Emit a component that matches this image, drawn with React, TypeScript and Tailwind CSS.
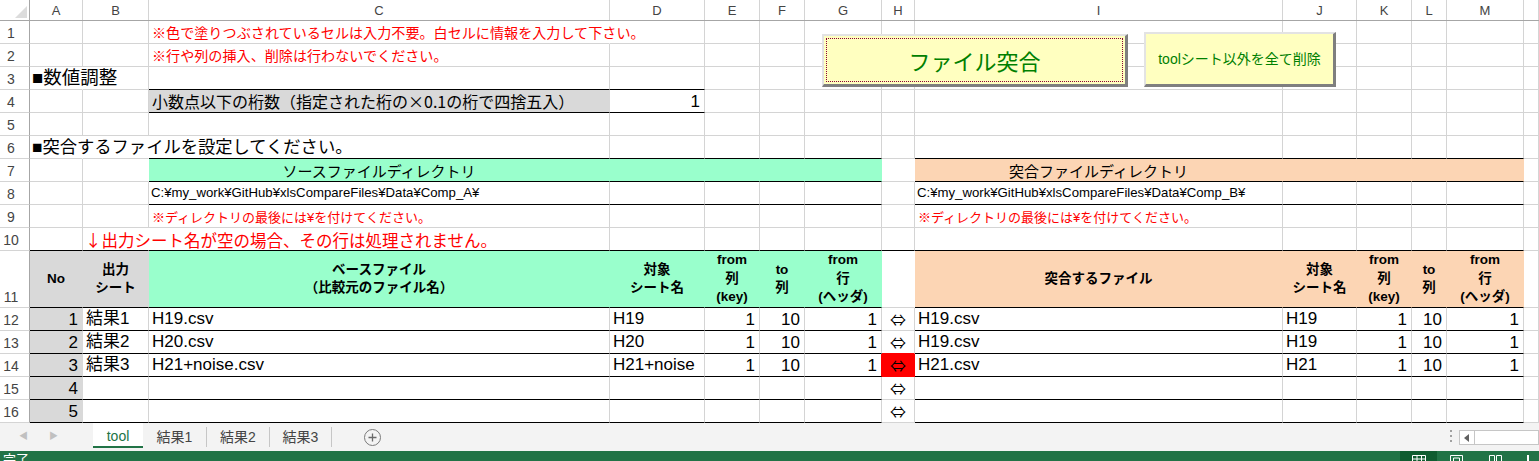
import type { ReactNode } from 'react';
import clsx from 'clsx';

// column widths A..N (each includes its 1px right gridline)
const W = [
  'w-[53px]', 'w-[66px]', 'w-[461px]', 'w-[95px]', 'w-[55px]', 'w-[45px]', 'w-[77px]',
  'w-[33px]', 'w-[368px]', 'w-[74px]', 'w-[55px]', 'w-[35px]', 'w-[77px]', 'flex-1',
];
const LETTERS = ['A', 'B', 'C', 'D', 'E', 'F', 'G', 'H', 'I', 'J', 'K', 'L', 'M', ''];

type Cell = { bg?: string; r?: string; b?: string; cls?: string; t?: ReactNode };

const BLK = 'border-b-black';
const NOR = 'border-r-transparent';
const L = 'items-end pl-[3px] pb-[3px]';
const R = 'items-end justify-end pr-[4px] pb-[2px]';

const green = (extra: Cell = {}): Cell => ({ bg: 'bg-[#99ffcc]', r: 'border-r-[#99ffcc]', b: BLK, ...extra });
const peach = (extra: Cell = {}): Cell => ({ bg: 'bg-[#fcd5b4]', r: 'border-r-[#fcd5b4]', b: BLK, ...extra });
const gray = (extra: Cell = {}): Cell => ({ bg: 'bg-[#d9d9d9]', r: 'border-r-[#d9d9d9]', b: BLK, ...extra });

const Over = ({ cls, children }: { cls: string; children: ReactNode }) => (
  <span className={clsx('relative z-10 whitespace-nowrap leading-none', cls)}>{children}</span>
);

const Head = ({ lines }: { lines: string[] }) => (
  <div className="flex w-full flex-col items-center justify-center text-center text-[13.5px] font-bold leading-[18.5px] text-black">
    {lines.map((l) => (
      <span key={l} className="whitespace-nowrap">{l}</span>
    ))}
  </div>
);

const Row = ({ n, tall, cells }: { n: number; tall?: boolean; cells: Record<number, Cell> }) => (
  <div className={clsx('flex', tall ? 'h-[57px]' : 'h-[23px]')}>
    <div className="flex w-[30px] shrink-0 items-end justify-center border-r border-b border-r-[#a6a6a6] border-b-[#d4d4d4] pr-[7px] pb-[3px] text-[14px] leading-none text-[#444]">
      {n}
    </div>
    {W.map((w, i) => {
      const c = cells[i] ?? {};
      return (
        <div
          key={i}
          className={clsx(
            'flex shrink-0 border-r border-b',
            w,
            c.bg,
            c.r ?? 'border-r-[#d4d4d4]',
            c.b ?? 'border-b-[#d4d4d4]',
            c.cls,
          )}
        >
          {c.t}
        </div>
      );
    })}
  </div>
);

const red = (s: string, size = 'text-[14px]') => <Over cls={clsx(size, 'text-[#ff0000]')}>{s}</Over>;
const data = (s: string) => <Over cls="text-[17px] text-black">{s}</Over>;
const num = (s: string) => <span className="text-[17px] leading-none text-black">{s}</span>;

const dataRow = (no: string, out: string, base: string, sheet: string, target: string, tsheet: string, hl = false, above = false): Cell[] => {
  const b = (extra: Cell = {}): Cell => ({ b: BLK, ...extra });
  return [
    gray({ cls: R, t: num(no) }),
    b({ cls: L, t: out ? data(out) : null }),
    b({ cls: L, t: base ? data(base) : null }),
    b({ cls: L, t: sheet ? data(sheet) : null }),
    b({ cls: R, t: out ? num('1') : null }),
    b({ cls: R, t: out ? num('10') : null }),
    b({ cls: R, t: out ? num('1') : null, r: hl ? 'border-r-[#ff0000]' : undefined }),
    {
      cls: 'items-end justify-center pb-[3px]',
      bg: hl ? 'bg-[#ff0000]' : undefined,
      r: hl ? 'border-r-[#ff0000]' : undefined,
      b: hl || above ? 'border-b-[#ff0000]' : undefined,
      t: <span className="text-[16px] leading-none text-black font-['Noto_Sans_CJK_JP',sans-serif]">⇔</span>,
    },
    b({ cls: L, t: target ? data(target) : null }),
    b({ cls: L, t: tsheet ? data(tsheet) : null }),
    b({ cls: R, t: out ? num('1') : null }),
    b({ cls: R, t: out ? num('10') : null }),
    b({ cls: R, t: out ? num('1') : null }),
  ];
};

const toMap = (arr: Cell[]) => Object.fromEntries(arr.map((c, i) => [i, c])) as Record<number, Cell>;

const ExcelButton = ({ className, children, focus }: { className: string; children: ReactNode; focus?: boolean }) => (
  <div
    className={clsx(
      'absolute z-20 border-t-2 border-l-2 border-t-[#e3e3e3] border-l-[#e3e3e3] border-r-[3px] border-b-[3px] border-r-[#7f7f7f] border-b-[#7f7f7f] bg-[#ffffc0] p-[2px]',
      className,
    )}
  >
    <div className={clsx('flex h-full w-full items-center justify-center', focus && 'border border-dotted border-[#8b0033]')}>
      {children}
    </div>
  </div>
);

export default function App() {
  return (
    <div className="relative h-[461px] w-[1539px] overflow-hidden bg-white font-['Liberation_Sans','Noto_Sans_CJK_JP',sans-serif]">
      {/* column headers */}
      <div className="flex h-[21px] border-b border-b-[#a6a6a6]">
        <div className="relative w-[30px] shrink-0 border-r border-r-[#a6a6a6]">
          <svg className="absolute left-[15px] top-[6px]" width="12" height="12" viewBox="0 0 12 12">
            <path d="M12 0 L12 12 L0 12 Z" fill="#dcdcdc" />
          </svg>
        </div>
        {W.map((w, i) => (
          <div
            key={i}
            className={clsx('flex shrink-0 items-center justify-center border-r border-r-[#d4d4d4] text-[13px] leading-none text-[#444]', w)}
          >
            {LETTERS[i]}
          </div>
        ))}
      </div>

      <Row n={1} cells={{ 2: { r: NOR, cls: L, t: red('※色で塗りつぶされているセルは入力不要。白セルに情報を入力して下さい。', 'text-[14.1px]') } }} />
      <Row n={2} cells={{ 2: { cls: L, t: red('※行や列の挿入、削除は行わないでください。', 'text-[14.1px]') } }} />
      <Row
        n={3}
        cells={{
          0: { r: NOR, cls: 'items-end pl-[2px] pb-[2px]', t: <Over cls="text-[18.5px] text-black">■数値調整</Over> },
          2: { b: BLK },
          3: { b: BLK },
        }}
      />
      <Row
        n={4}
        cells={{
          2: gray({
            cls: L,
            t: <Over cls="text-[16px] text-black font-['Noto_Sans_CJK_JP',sans-serif]">小数点以下の桁数（指定された桁の×0.1の桁で四捨五入）</Over>,
          }),
          3: { b: BLK, cls: R, t: num('1') },
        }}
      />
      <Row n={5} cells={{}} />
      <Row
        n={6}
        cells={{
          0: { r: NOR, cls: 'items-end pl-[2px] pb-[2px]', t: <Over cls="text-[17.3px] text-black">■突合するファイルを設定してください。</Over> },
          1: { r: NOR },
          2: { b: BLK },
          3: { b: BLK },
          4: { b: BLK },
          5: { b: BLK },
          6: { b: BLK },
          8: { b: BLK },
          9: { b: BLK },
          10: { b: BLK },
          11: { b: BLK },
          12: { b: BLK },
        }}
      />
      <Row
        n={7}
        cells={{
          1: { r: NOR },
          2: green({ cls: 'items-end justify-center pb-[2px]', t: <span className="text-[15px] leading-none text-black">ソースファイルディレクトリ</span> }),
          3: green(),
          4: green(),
          5: green(),
          6: green(),
          7: { r: NOR },
          8: peach({ cls: 'items-end justify-center pb-[2px]', t: <span className="text-[15px] leading-none text-black">突合ファイルディレクトリ</span> }),
          9: peach(),
          10: peach(),
          11: peach(),
          12: peach(),
        }}
      />
      <Row
        n={8}
        cells={{
          2: { b: BLK, cls: 'items-end pl-[2px] pb-[5px]', t: <Over cls="text-[13.2px] text-black">C:¥my_work¥GitHub¥xlsCompareFiles¥Data¥Comp_A¥</Over> },
          3: { b: BLK },
          4: { b: BLK },
          5: { b: BLK },
          6: { b: BLK },
          8: { b: BLK, cls: 'items-end pl-[2px] pb-[5px]', t: <Over cls="text-[13.2px] text-black">C:¥my_work¥GitHub¥xlsCompareFiles¥Data¥Comp_B¥</Over> },
          9: { b: BLK },
          10: { b: BLK },
          11: { b: BLK },
          12: { b: BLK },
        }}
      />
      <Row
        n={9}
        cells={{
          2: { cls: L, t: red('※ディレクトリの最後には¥を付けてください。', 'text-[13px]') },
          8: { cls: L, t: red('※ディレクトリの最後には¥を付けてください。', 'text-[13px]') },
        }}
      />
      <Row
        n={10}
        cells={{
          0: { b: BLK },
          1: {
            b: BLK,
            r: NOR,
            cls: 'items-end pl-[2px] pb-[2px]',
            t: (
              <Over cls="text-[16.5px] text-[#ff0000] font-['Noto_Sans_CJK_JP',sans-serif]">
                ↓出力シート名が空の場合、その行は処理されません。
              </Over>
            ),
          },
          2: { b: BLK },
          3: { b: BLK },
          4: { b: BLK },
          5: { b: BLK },
          6: { b: BLK },
          7: { b: BLK },
          8: { b: BLK },
          9: { b: BLK },
          10: { b: BLK },
          11: { b: BLK },
          12: { b: BLK },
        }}
      />
      <Row
        n={11}
        tall
        cells={{
          0: gray({ t: <Head lines={['No']} /> }),
          1: gray({ t: <Head lines={['出力', 'シート']} /> }),
          2: green({ t: <Head lines={['ベースファイル', '（比較元のファイル名）']} /> }),
          3: green({ t: <Head lines={['対象', 'シート名']} /> }),
          4: green({ t: <Head lines={['from', '列', '(key)']} /> }),
          5: green({ t: <Head lines={['to', '列']} /> }),
          6: green({ t: <Head lines={['from', '行', '(ヘッダ)']} /> }),
          7: { r: NOR },
          8: peach({ t: <Head lines={['突合するファイル']} /> }),
          9: peach({ t: <Head lines={['対象', 'シート名']} /> }),
          10: peach({ t: <Head lines={['from', '列', '(key)']} /> }),
          11: peach({ t: <Head lines={['to', '列']} /> }),
          12: peach({ t: <Head lines={['from', '行', '(ヘッダ)']} /> }),
        }}
      />
      <Row n={12} cells={toMap(dataRow('1', '結果1', 'H19.csv', 'H19', 'H19.csv', 'H19'))} />
      <Row n={13} cells={toMap(dataRow('2', '結果2', 'H20.csv', 'H20', 'H19.csv', 'H19', false, true))} />
      <Row n={14} cells={toMap(dataRow('3', '結果3', 'H21+noise.csv', 'H21+noise', 'H21.csv', 'H21', true))} />
      <Row n={15} cells={toMap(dataRow('4', '', '', '', '', ''))} />
      <Row n={16} cells={toMap(dataRow('5', '', '', '', '', ''))} />

      {/* sheet tabs */}
      <div className="flex h-[28px] items-start bg-[#f3f3f3] text-[14px] text-[#444]">
        <div className="flex w-[93px] items-center gap-[21px] pt-[9px] pl-[19px] text-[9px] leading-none text-[#c0c0c0]">
          <span>◀</span>
          <span>▶</span>
        </div>
        <div className="flex h-[25px] w-[50px] items-center justify-center border-b-2 border-b-[#217346] bg-white pt-[2px] leading-none text-[#217346]">
          tool
        </div>
        <div className="flex h-[25px] w-[63px] items-center justify-center pt-[2px] leading-none">結果1</div>
        <div className="mt-[4px] h-[20px] w-px bg-[#c6c6c6]" />
        <div className="flex h-[25px] w-[62px] items-center justify-center pt-[2px] leading-none">結果2</div>
        <div className="mt-[4px] h-[20px] w-px bg-[#c6c6c6]" />
        <div className="flex h-[25px] w-[61px] items-center justify-center pt-[2px] leading-none">結果3</div>
        <div className="mt-[4px] h-[20px] w-px bg-[#c6c6c6]" />
        <div className="ml-[32px] mt-[6px] flex h-[17px] w-[17px] items-center justify-center rounded-full border border-[#7a7a7a]">
          <svg width="9" height="9" viewBox="0 0 9 9">
            <path d="M4.5 0.5 V8.5 M0.5 4.5 H8.5" stroke="#6a6a6a" strokeWidth="1.3" />
          </svg>
        </div>
        <div className="flex-1" />
        <div className="mt-[7px] flex w-[16px] flex-col items-center gap-[3px]">
          <span className="h-[2px] w-[2px] bg-[#a0a0a0]" />
          <span className="h-[2px] w-[2px] bg-[#a0a0a0]" />
          <span className="h-[2px] w-[2px] bg-[#a0a0a0]" />
        </div>
        <div className="mt-[7px] flex h-[15px] w-[80px] border border-[#c6c6c6] bg-white">
          <div className="flex w-[15px] items-center justify-center border-r border-r-[#c6c6c6]">
            <svg width="6" height="8" viewBox="0 0 6 8">
              <path d="M5 0 L0 4 L5 8 Z" fill="#606060" />
            </svg>
          </div>
        </div>
      </div>

      {/* status bar */}
      <div className="flex h-[10px] items-start bg-[#217346] text-white">
        <span className="pl-[3px] pt-[2px] text-[13px] leading-none">完了</span>
        <div className="flex-1" />
        <div className="flex h-full w-[37px] items-start justify-center bg-[#0f5c30] pt-[4px]">
          <svg width="14" height="6" viewBox="0 0 14 6">
            <path d="M0.5 0.5 H13.5 M0.5 0.5 V6 M5 0.5 V6 M9.5 0.5 V6 M13.5 0.5 V6 M0.5 4 H13.5" stroke="#fff" fill="none" />
          </svg>
        </div>
        <div className="flex w-[39px] items-start justify-center pt-[4px]">
          <svg width="13" height="6" viewBox="0 0 13 6">
            <path d="M0.5 0.5 H12.5 V6 M0.5 0.5 V6 M3.5 3 H9.5 V6 M3.5 3 V6" stroke="#fff" fill="none" />
          </svg>
        </div>
        <div className="flex w-[39px] items-start justify-center pt-[4px]">
          <svg width="13" height="6" viewBox="0 0 13 6">
            <path d="M0.5 0.5 H5.5 V6 M0.5 0.5 V6 M7.5 0.5 H12.5 V6 M7.5 0.5 V6" stroke="#fff" fill="none" />
          </svg>
        </div>
        <div className="w-[24px]">
          <div className="ml-[12px] mt-[4px] h-[6px] w-[2px] bg-white" />
        </div>
      </div>

      {/* form buttons over the sheet */}
      <ExcelButton className="left-[822px] top-[34px] h-[53px] w-[306px]" focus>
        <span className="text-[22px] leading-none text-[#008000] font-['Noto_Sans_CJK_JP',sans-serif]">ファイル突合</span>
      </ExcelButton>
      <ExcelButton className="left-[1144px] top-[32px] h-[55px] w-[192px]">
        <span className="text-[14px] leading-none text-[#008000]">toolシート以外を全て削除</span>
      </ExcelButton>
    </div>
  );
}
